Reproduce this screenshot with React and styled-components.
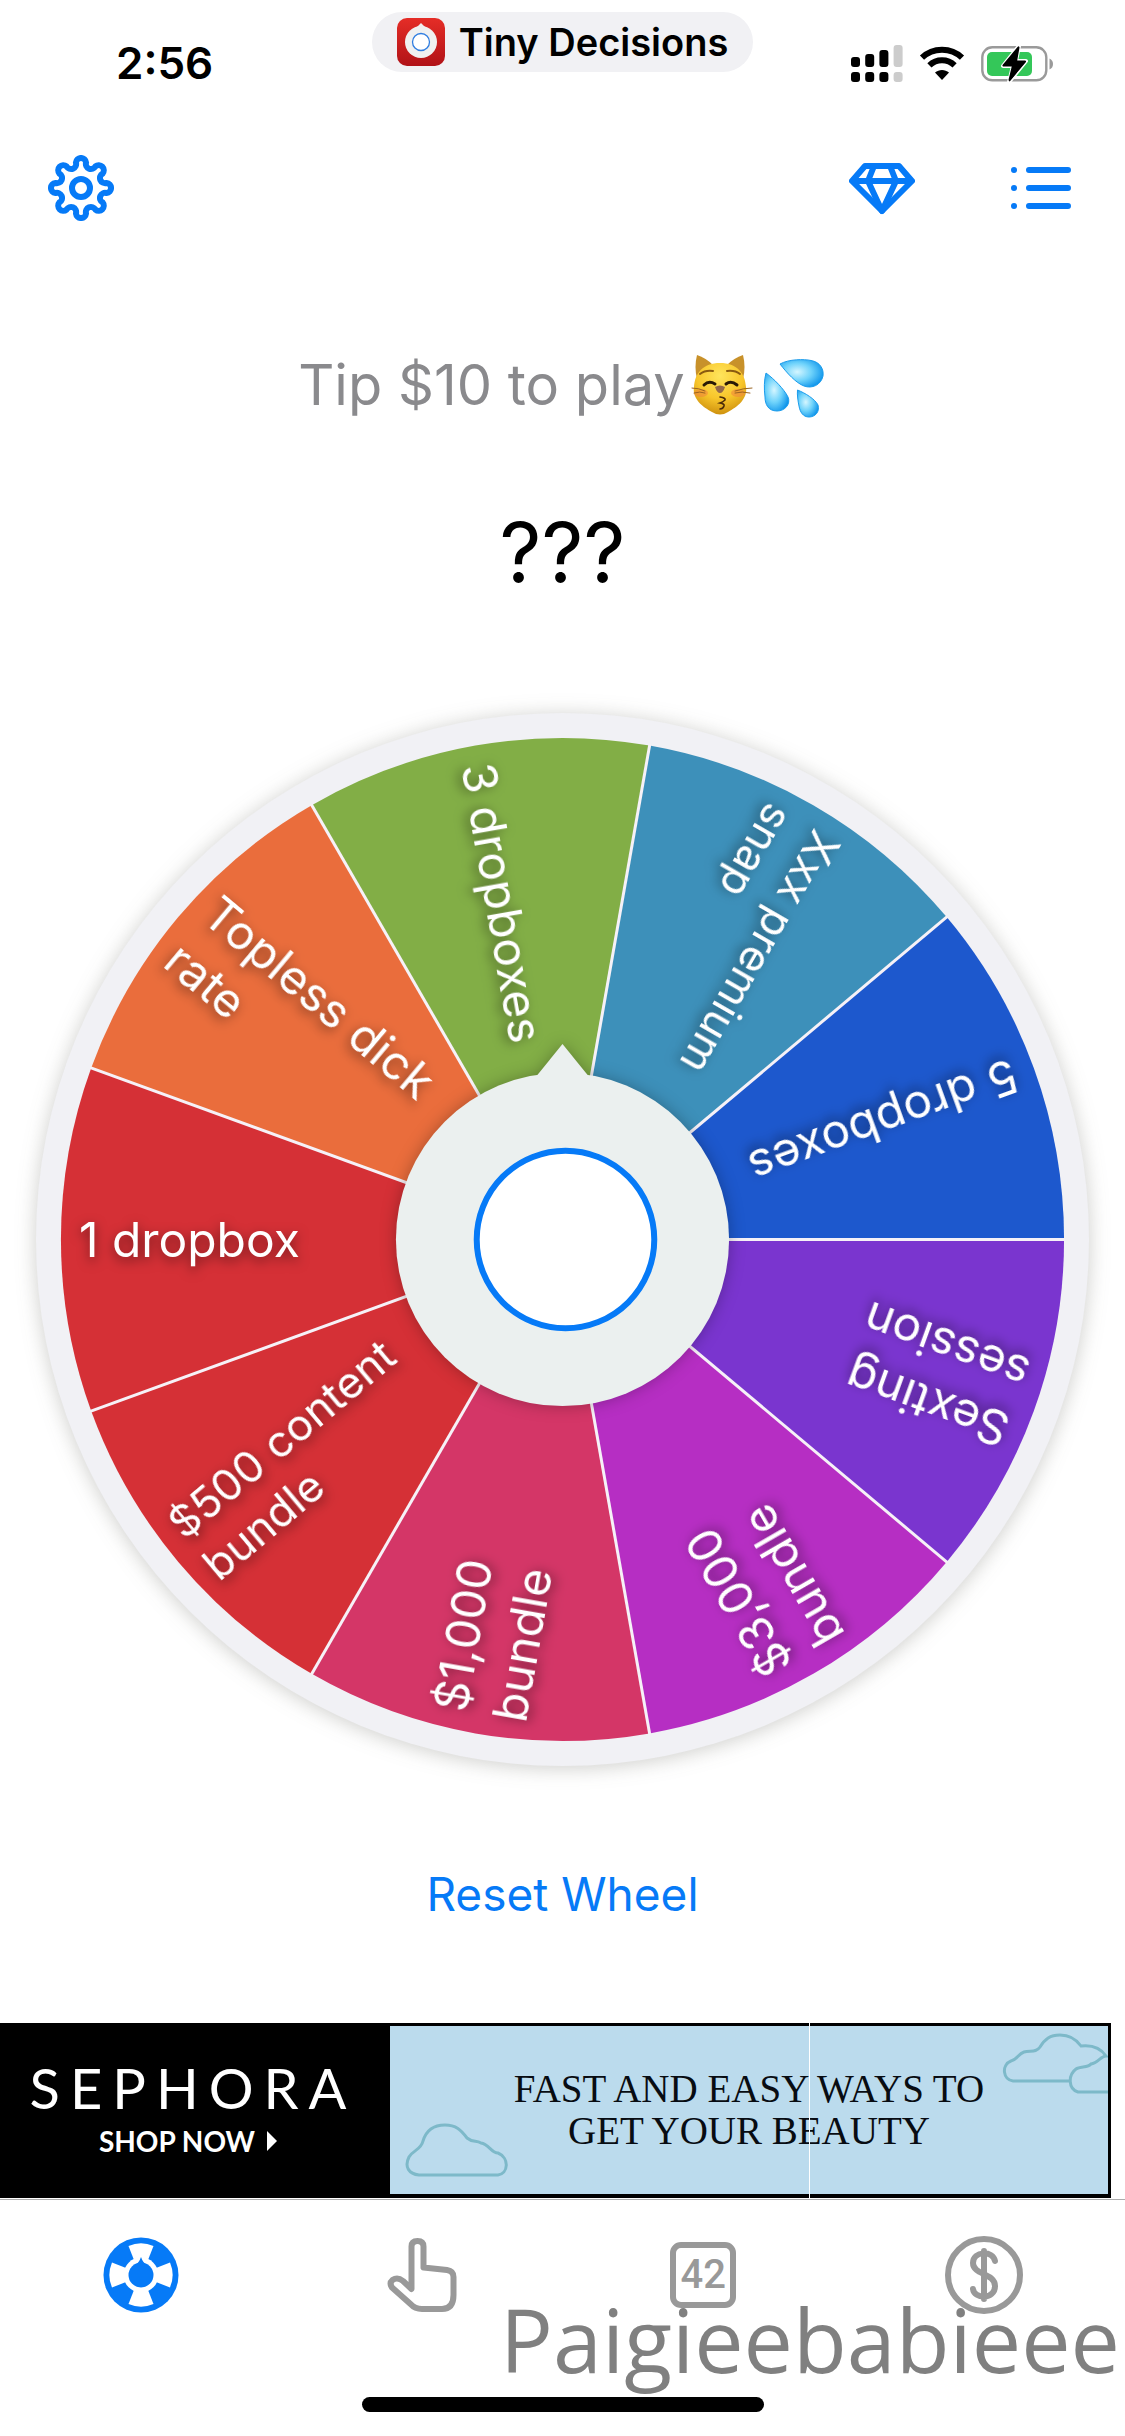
import React from "react";
import styled, { createGlobalStyle } from "styled-components";

const BLUE = "#067af7";
const GREY = "#999999";

const GlobalStyle = createGlobalStyle`
  *, *::before, *::after { box-sizing: border-box; }
  body {
    margin: 0;
    background: #fff;
    color: #000;
    font-family: Inter, "Liberation Sans", sans-serif;
  }
  svg { display: block; }
`;

const Screen = styled.div`
  display: flex;
  flex-direction: column;
  min-height: 100vh;
  overflow: hidden;
`;

const StatusBar = styled.header`
  display: grid;
  grid-template-columns: 1fr auto 1fr;
  padding-top: 12px;
  height: 82px;
`;

const Time = styled.time`
  align-self: end;
  padding-left: 116px;
  font-size: 44px;
  line-height: 38px;
  font-weight: 600;
`;

const AppPill = styled.div`
  display: flex;
  align-items: center;
  gap: 14px;
  height: 60px;
  padding: 0 25px;
  border-radius: 30px;
  background: #f1f1f4;
  font-size: 38px;
  line-height: 60px;
  font-weight: 600;
`;

const StatusIcons = styled.div`
  display: flex;
  align-self: end;
  justify-content: flex-end;
  gap: 16px;
  padding-right: 72px;
`;

const Toolbar = styled.nav`
  display: flex;
  align-items: center;
  justify-content: space-between;
  padding: 0 51px 0 48px;
  margin-top: 73px;
`;

const ToolGroup = styled.div`
  display: flex;
  gap: 93px;
`;

const IconButton = styled.button`
  width: 66px;
  height: 66px;
  padding: 0;
  border: 0;
  background: none;
  color: ${BLUE};
`;

const Main = styled.main`
  display: flex;
  flex-direction: column;
  align-items: center;
  flex: 1;
`;

const Title = styled.h1`
  display: flex;
  align-items: center;
  gap: 3px;
  margin: 128px 0 0;
  font-size: 56px;
  line-height: 72px;
  font-weight: 400;
  color: #8a8a8d;
`;

const Result = styled.output`
  margin-top: 84px;
  font-size: 82px;
  line-height: 96px;
`;

const WheelArea = styled.section`
  position: relative;
  width: 100%;
  margin-top: 76px;
`;

const WheelDrawing = styled.svg`
  width: 100%;
  height: auto;
`;

const Rim = styled.circle`
  fill: #f1f1f5;
  filter: drop-shadow(0 2px 10px rgba(60, 60, 50, 0.26));
`;

const SliceLabel = styled.text`
  fill: #fff;
  font-size: ${(p) => (p.$compact ? 44 : 48)}px;
  filter: drop-shadow(0 4px 6px rgba(0, 0, 0, 0.5));
`;

const SpinButton = styled.button`
  position: absolute;
  inset: 0;
  width: 36%;
  height: 36%;
  margin: auto;
  padding: 0;
  border: 0;
  border-radius: 50%;
  background: none;
`;

const HubDrawing = styled.svg`
  width: 100%;
  height: 100%;
  overflow: visible;
`;

const HubShape = styled.g`
  fill: #ebf0ef;
  filter: drop-shadow(0 0 8px rgba(0, 0, 0, 0.28));
`;

const ResetButton = styled.button`
  margin-top: 62px;
  padding: 0;
  border: 0;
  background: none;
  color: ${BLUE};
  font-family: inherit;
  font-size: 46px;
  line-height: 60px;
`;

const Ad = styled.a`
  position: relative;
  display: flex;
  height: 175px;
  margin: 98px 14px 0 0;
  padding: 3px 3px 4px 0;
  background: #000;
  text-decoration: none;
`;

const AdBrand = styled.div`
  display: flex;
  flex-direction: column;
  align-items: center;
  flex: 0 0 390px;
  padding: 26px 14px 0 0;
  color: #fff;
  font-family: Lato, "Liberation Sans", sans-serif;
`;

const BrandName = styled.strong`
  padding-left: 10px;
  font-size: 56px;
  line-height: 72px;
  font-weight: 400;
  letter-spacing: 10px;
`;

const ShopNow = styled.span`
  display: flex;
  align-items: center;
  gap: 12px;
  font-size: 28px;
  line-height: 34px;
  font-weight: 700;
`;

const AdPanel = styled.div`
  position: relative;
  display: flex;
  align-items: center;
  justify-content: center;
  flex: 1;
  background: #bbdbed;
  color: #080c12;
  font-family: "Liberation Serif", serif;
  font-size: 39px;
  line-height: 42px;
  text-align: center;
`;

const Cloud = styled.svg`
  position: absolute;
  fill: none;
  stroke: #7db9c9;
  stroke-width: 3;
  ${(p) => (p.$corner === "left" ? "left: 14px; bottom: 16px;" : "right: 0; top: 6px;")}
`;

const AdSeam = styled.span`
  position: absolute;
  top: 0;
  bottom: 0;
  right: 301px;
  width: 1px;
  background: #fff;
`;

const Footer = styled.footer`
  position: relative;
  margin-top: 1px;
  padding-bottom: 24px;
  border-top: 1px solid #adadad;
`;

const Tabs = styled.nav`
  display: grid;
  grid-template-columns: repeat(4, 1fr);
  justify-items: center;
  padding: 36px 0 83px;
`;

const Tab = styled.button`
  padding: 0;
  border: 0;
  background: none;
  color: ${(p) => (p.$active ? BLUE : GREY)};
`;

const HomeIndicator = styled.div`
  width: 402px;
  height: 15px;
  margin: 0 auto;
  border-radius: 8px;
  background: #000;
`;

const Watermark = styled.span`
  position: absolute;
  right: 5px;
  bottom: 37px;
  font-family: "Open Sans", "Noto Sans", sans-serif;
  font-size: 88px;
  line-height: 120px;
  color: #808080;
`;

const SLICES = [
  { angle: -20, color: "#1d58cd", lines: ["5 dropboxes"] },
  { angle: -60, color: "#3d90ba", lines: ["Xxx premium", "snap"], compact: true },
  { angle: -100, color: "#82ae46", lines: ["3 dropboxes"] },
  { angle: -140, color: "#ea6d3c", lines: ["Topless dick", "rate"] },
  { angle: 180, color: "#d53036", lines: ["1 dropbox"] },
  { angle: 140, color: "#d53036", lines: ["$500 content", "bundle"], compact: true },
  { angle: 100, color: "#d43667", lines: ["$1,000", "bundle"] },
  { angle: 60, color: "#b62ec3", lines: ["$3,000", "bundle"] },
  { angle: 20, color: "#7a35cf", lines: ["Sexting", "session"] },
];

const DISC = 502;

const polar = (radius, degrees) => {
  const t = (degrees * Math.PI) / 180;
  return `${(radius * Math.cos(t)).toFixed(2)} ${(radius * Math.sin(t)).toFixed(2)}`;
};

const baseline = (count, index, compact) => {
  if (count === 1) return 18;
  return -12 + index * (compact ? 54 : 60);
};

function Wheel() {
  return (
    <WheelDrawing viewBox="-563 -563 1126 1126" role="img" aria-label="Decision wheel">
      <Rim r="527" />
      {SLICES.map(({ angle, color }) => (
        <path
          key={angle}
          fill={color}
          d={`M0 0L${polar(DISC, angle - 20)}A${DISC} ${DISC} 0 0 1 ${polar(DISC, angle + 20)}Z`}
        />
      ))}
      {SLICES.map(({ angle }) => (
        <path key={angle} d={`M0 0L${polar(DISC + 1, angle - 20)}`} stroke="#f6f1f7" strokeWidth="3" />
      ))}
      {SLICES.map(({ angle, lines, compact }) => (
        <SliceLabel key={angle} $compact={compact} transform={`rotate(${angle + 180})`}>
          {lines.map((line, i) => (
            <tspan key={line} x="-484" y={baseline(lines.length, i, compact)}>
              {line}
            </tspan>
          ))}
        </SliceLabel>
      ))}
    </WheelDrawing>
  );
}

function Hub() {
  return (
    <HubDrawing viewBox="-203 -203 406 406" aria-hidden="true">
      <HubShape>
        <circle r="167" />
        <path d="M-26 -164L0 -196L26 -164Z" />
      </HubShape>
      <circle cx="3" r="89" fill="#fff" stroke={BLUE} strokeWidth="6" />
    </HubDrawing>
  );
}

function AppIcon() {
  return (
    <svg width="48" height="48" viewBox="0 0 48 48" aria-hidden="true">
      <defs>
        <linearGradient id="appRed" x1="0" y1="0" x2="0" y2="1">
          <stop offset="0" stopColor="#e52d27" />
          <stop offset="1" stopColor="#b11217" />
        </linearGradient>
      </defs>
      <rect width="48" height="48" rx="10" fill="url(#appRed)" />
      <circle cx="24" cy="24" r="16" fill="#f0f0f0" />
      <path d="M19 10L24 5L29 10Z" fill="#f0f0f0" />
      <circle cx="24" cy="24" r="8.5" fill="#fff" stroke="#2f7de0" strokeWidth="1.3" />
    </svg>
  );
}

function SignalIcon() {
  const tops = [12, 9, 5, 0];
  return (
    <svg width="52" height="37" viewBox="0 0 52 37" role="img" aria-label="Signal">
      {tops.map((top, i) => (
        <g key={top} fill={i === 3 ? "#cccccc" : "#000"}>
          <rect x={i * 14.2} y={top} width="9" height={22 - top} rx="3" />
          <rect x={i * 14.2} y="27" width="9" height="10" rx="3" />
        </g>
      ))}
    </svg>
  );
}

function WifiIcon() {
  return (
    <svg width="46" height="37" viewBox="0 0 46 37" role="img" aria-label="Wi-Fi">
      <g fill="none" stroke="#000" strokeWidth="6">
        <path d="M3 12.6C14 2 32 2 43 12.6" />
        <path d="M10.4 20.4C17.5 13.6 28.5 13.6 35.6 20.4" />
      </g>
      <path d="M23 35L16 27.6C20 24 26 24 30 27.6Z" />
    </svg>
  );
}

function BatteryIcon() {
  return (
    <svg width="72" height="37" viewBox="0 0 72 37" role="img" aria-label="Charging">
      <rect x="1.3" y="2.3" width="64" height="33" rx="10" fill="none" stroke="#9a9a9a" strokeWidth="2.4" />
      <path d="M68.5 13.5Q72 15 72 19Q72 23 68.5 24.5Z" fill="#9a9a9a" />
      <rect x="6" y="7" width="45" height="24" rx="5" fill="#34c759" />
      <path d="M38 1L22 21H32L28 37L45 16H35Z" stroke="#fff" strokeWidth="4" strokeLinejoin="round" paintOrder="stroke" />
      <path d="M37.5 2.5L22.5 20.5H32L28.5 35L44 16.5H35Z" stroke="#000" strokeWidth="2" strokeLinejoin="round" />
    </svg>
  );
}

function GearIcon() {
  const steps = Array.from({ length: 16 }, (_, i) => i);
  const outline = steps
    .map((i) => `A5.1 5.1 0 0 ${i % 2 === 0 ? 1 : 0} ${polar(26, i * 22.5 + 11.25)}`)
    .join("");
  return (
    <svg width="66" height="66" viewBox="-33 -33 66 66" fill="none" stroke="currentColor" strokeWidth="6" aria-hidden="true">
      <path d={`M${polar(26, -11.25)}${outline}Z`} strokeLinejoin="round" />
      <circle r="9" />
    </svg>
  );
}

function DiamondIcon() {
  return (
    <svg width="66" height="66" viewBox="0 0 66 66" fill="none" stroke="currentColor" strokeWidth="6" strokeLinejoin="round" aria-hidden="true">
      <path d="M16 11H50L63 26L33 56L3 26Z" />
      <path d="M3 26H63M25 11L19 26L33 56L47 26L41 11" strokeWidth="6" />
    </svg>
  );
}

function ListIcon() {
  return (
    <svg width="66" height="66" viewBox="0 0 66 66" stroke="currentColor" strokeWidth="6" strokeLinecap="round" aria-hidden="true">
      <path d="M6 15H6.01M6 33H6.01M6 51H6.01M21 15H60M21 33H60M21 51H60" />
    </svg>
  );
}

function KissingCat() {
  return (
    <svg width="68" height="68" viewBox="0 0 68 68" role="img" aria-label="😽">
      <defs>
        <radialGradient id="fur" cx="0.5" cy="0.25" r="0.8">
          <stop offset="0" stopColor="#ffe45c" />
          <stop offset="0.55" stopColor="#f8c62b" />
          <stop offset="1" stopColor="#c8890a" />
        </radialGradient>
      </defs>
      <path d="M9 4Q18 7 25 14L9 28Q6 16 9 4Z" fill="#c8912a" />
      <path d="M55 4Q46 7 39 14L55 28Q58 16 55 4Z" fill="#c8912a" />
      <path d="M32 12C49 12 57 22 58 36C60 48 49 56 40 61Q32 66 24 61C15 56 4 48 6 36C7 22 15 12 32 12Z" fill="url(#fur)" />
      <ellipse cx="13" cy="42" rx="7" ry="4" fill="#f0883c" opacity="0.6" />
      <ellipse cx="50" cy="42" rx="7" ry="4" fill="#f0883c" opacity="0.6" />
      <g fill="none" strokeLinecap="round">
        <path d="M12 23Q17 19 25 20M39 20Q47 19 52 23" stroke="#8a5a10" strokeWidth="2" />
        <path d="M16 34Q21 29 27 33M38 33Q43 29 49 34" stroke="#2a1a06" strokeWidth="3" />
        <path d="M4 37Q11 37 17 40M6 42Q12 40 17 42M64 37Q56 37 47 40M62 42Q54 40 47 42" stroke="#9a6420" strokeWidth="1" />
        <path d="M32 46Q38 47 37 49Q35 51 32 52Q37 53 36 55Q35 58 32 58" stroke="#4a2a08" strokeWidth="1.6" />
      </g>
      <path d="M27 36Q32 33 37 36Q35 42 32 42Q29 42 27 36Z" fill="#94694a" />
    </svg>
  );
}

function Droplets() {
  return (
    <svg width="68" height="68" viewBox="0 0 68 68" role="img" aria-label="💦">
      <defs>
        <radialGradient id="water" cx="0.4" cy="0.45" r="0.65">
          <stop offset="0" stopColor="#d5f6ff" />
          <stop offset="0.5" stopColor="#6fd3fb" />
          <stop offset="1" stopColor="#0c93ea" />
        </radialGradient>
      </defs>
      <g fill="url(#water)" stroke="#1a9cec" strokeWidth="1">
        <path d="M21 13C30 8 45 8 52 9.5C61 11 65 18 64 25C62 34 53 38 45 35C37 32 28 22 21 13Z" />
        <path d="M7 22C15 28 25 38 29 46C32 53 26 60 18 60C9 60 6 53 6 46C5 38 5 29 7 22Z" />
        <path d="M38.5 39C46 42 56 48 59 54C61 61 56 66 50 66C44 66 41 61 40 55C39 50 38 44 38.5 39Z" />
      </g>
    </svg>
  );
}

function WheelTabIcon() {
  return (
    <svg width="76" height="76" viewBox="-38 -38 76 76" aria-hidden="true">
      <circle r="37.5" fill="currentColor" />
      {[0, 90, 180, 270].map((turn) => (
        <path key={turn} transform={`rotate(${turn})`} fill="#fff" d="M-7 -15L-12.5 -29A31.7 31.7 0 0 1 12.5 -29L7 -15Z" />
      ))}
      <circle r="17.5" fill="#fff" />
      <circle r="12.5" fill="currentColor" />
      <path d="M-6 -10Q-2 -12 0 -18Q2 -12 6 -10Z" fill="currentColor" />
    </svg>
  );
}

function HandTabIcon() {
  return (
    <svg width="76" height="76" viewBox="0 0 76 76" fill="none" stroke="currentColor" strokeWidth="6" strokeLinejoin="round" aria-hidden="true">
      <path d="M27.5 52V9.5Q27.5 4 33.5 4Q39.5 4 39.5 9.5V30.5L63 33Q69.5 34 69.5 40V58Q69.5 72 58 72H38Q31 72 26.5 67L8 50.5Q5 46 8.5 43Q13.5 39.5 19 44Z" />
    </svg>
  );
}

const NumberBox = styled.span`
  display: grid;
  place-items: center;
  width: 66px;
  height: 66px;
  margin: 0 5px;
  border: 6px solid currentColor;
  border-radius: 11px;
  font-family: Roboto, sans-serif;
  font-size: 40px;
  line-height: 54px;
  font-weight: 500;
`;

function DollarTabIcon() {
  return (
    <svg width="78" height="78" viewBox="-39 -39 78 78" fill="none" stroke="currentColor" strokeWidth="6" strokeLinecap="round" aria-hidden="true">
      <circle r="36" />
      <path d="M0 -24V24M11 -14C9 -25 -11 -24 -11 -12C-11 0 11 -2 11 11C11 25 -10 24 -11 14" />
    </svg>
  );
}

export default function App() {
  return (
    <Screen>
      <GlobalStyle />
      <StatusBar>
        <Time>2:56</Time>
        <AppPill>
          <AppIcon />
          Tiny Decisions
        </AppPill>
        <StatusIcons>
          <SignalIcon />
          <WifiIcon />
          <BatteryIcon />
        </StatusIcons>
      </StatusBar>

      <Toolbar>
        <IconButton aria-label="Settings">
          <GearIcon />
        </IconButton>
        <ToolGroup>
          <IconButton aria-label="Premium">
            <DiamondIcon />
          </IconButton>
          <IconButton aria-label="Decisions">
            <ListIcon />
          </IconButton>
        </ToolGroup>
      </Toolbar>

      <Main>
        <Title>
          Tip $10 to play
          <KissingCat />
          <Droplets />
        </Title>
        <Result>???</Result>
        <WheelArea>
          <Wheel />
          <SpinButton aria-label="Spin">
            <Hub />
          </SpinButton>
        </WheelArea>
        <ResetButton>Reset Wheel</ResetButton>
      </Main>

      <Ad href="#shop">
        <AdBrand>
          <BrandName>SEPHORA</BrandName>
          <ShopNow>
            SHOP NOW
            <svg width="10" height="20" viewBox="0 0 10 20" aria-hidden="true">
              <path d="M0 0L10 10L0 20Z" fill="#fff" />
            </svg>
          </ShopNow>
        </AdBrand>
        <AdPanel>
          <Cloud $corner="left" width="104" height="56" viewBox="403 2122 104 56" aria-hidden="true">
            <path d="M418 2175H497C507 2174 509 2158 497 2153C490 2153 488 2144 480 2143C475 2140 472 2143 466 2138C460 2130 455 2125 444 2125C432 2125 425 2131 422 2141C420 2150 412 2150 408 2157C403 2167 408 2174 418 2175Z" />
          </Cloud>
          FAST AND EASY WAYS TO
          <br />
          GET YOUR BEAUTY
          <Cloud $corner="right" width="106" height="64" viewBox="1002 2031 106 64" aria-hidden="true">
            <path d="M1069 2080H1013C1003 2079 1001 2064 1011 2060C1017 2059 1018 2053 1024 2051C1030 2049 1036 2052 1040 2046C1045 2038 1050 2034 1060 2034C1070 2034 1076 2038 1081 2045C1090 2044 1100 2046 1106 2055C1101 2055 1098 2062 1091 2063C1088 2067 1080 2065 1076 2068C1068 2074 1068 2088 1078 2091H1109" />
          </Cloud>
        </AdPanel>
        <AdSeam />
      </Ad>

      <Footer>
        <Tabs>
          <Tab $active aria-label="Wheel">
            <WheelTabIcon />
          </Tab>
          <Tab aria-label="Finger">
            <HandTabIcon />
          </Tab>
          <Tab aria-label="Random number">
            <NumberBox>42</NumberBox>
          </Tab>
          <Tab aria-label="Coin">
            <DollarTabIcon />
          </Tab>
        </Tabs>
        <HomeIndicator />
        <Watermark>Paigieebabieee</Watermark>
      </Footer>
    </Screen>
  );
}
